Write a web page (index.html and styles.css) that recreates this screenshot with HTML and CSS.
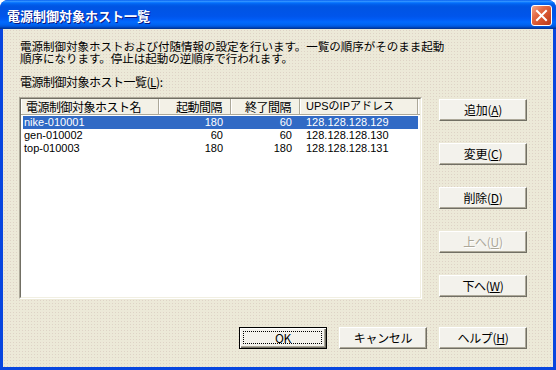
FILE: index.html
```html
<!DOCTYPE html>
<html lang="ja">
<head>
  <meta charset="UTF-8" />
  <title>電源制御対象ホスト一覧</title>
  <link rel="stylesheet" href="styles.css">
</head>
<body>

<div class="window">
  <div class="titlebar">
    <span class="title">電源制御対象ホスト一覧</span>
    <button class="close">
      <svg width="13" height="13" viewBox="0 0 13 13">
        <path d="M2 2 L11 11 M11 2 L2 11" stroke="#fff" stroke-width="2" stroke-linecap="square" fill="none"/>
      </svg>
    </button>
  </div>

  <div class="client">
    <div class="desc">
      <div class="line">電源制御対象ホストおよび付随情報の設定を行います。一覧の順序がそのまま起動</div>
      <div class="line">順序になります。停止は起動の逆順序で行われます。</div>
    </div>
    <div class="label">電源制御対象ホスト一覧(<u>L</u>):</div>

    <div class="main">
      <div class="listview">
        <div class="lv-inner">
          <div class="lv-head">
            <div class="hcol c-name">電源制御対象ホスト名</div>
            <div class="hcol c-start num">起動間隔</div>
            <div class="hcol c-stop num">終了間隔</div>
            <div class="hcol c-ip">UPSのIPアドレス</div>
            <div class="hcol c-rest"></div>
          </div>
          <div class="lv-body">
            <div class="lv-row selected">
              <div class="cell c-name">nike-010001</div>
              <div class="cell c-start num">180</div>
              <div class="cell c-stop num">60</div>
              <div class="cell c-ip">128.128.128.129</div>
            </div>
            <div class="lv-row">
              <div class="cell c-name">gen-010002</div>
              <div class="cell c-start num">60</div>
              <div class="cell c-stop num">60</div>
              <div class="cell c-ip">128.128.128.130</div>
            </div>
            <div class="lv-row">
              <div class="cell c-name">top-010003</div>
              <div class="cell c-start num">180</div>
              <div class="cell c-stop num">180</div>
              <div class="cell c-ip">128.128.128.131</div>
            </div>
          </div>
        </div>
      </div>

      <div class="side">
        <button class="btn">追加(<u>A</u>)</button>
        <button class="btn">変更(<u>C</u>)</button>
        <button class="btn">削除(<u>D</u>)</button>
        <button class="btn" disabled>上へ(<u>U</u>)</button>
        <button class="btn">下へ(<u>W</u>)</button>
      </div>
    </div>

    <div class="footer">
      <button class="btn default">OK</button>
      <button class="btn">キャンセル</button>
      <button class="btn">ヘルプ(<u>H</u>)</button>
    </div>
  </div>
</div>

</body>
</html>
```

FILE: styles.css
```css
body{
  margin:0;
  font-family:"Noto Sans CJK JP",sans-serif;
  background:#fff
}
.window{
  width:556px;
  height:370px;
  display:flex;
  flex-direction:column;
  background:#0846df;
  border-radius:8px 8px 0 0;
  overflow:hidden
}

/* title bar */
.titlebar{
  height:29px;
  flex:none;
  display:flex;
  align-items:center;
  justify-content:space-between;
  padding:0 4px 0 7px;
  box-sizing:border-box;
  background:linear-gradient(to bottom,#0058ee 0%,#3593ff 4%,#288eff 6%,#127dff 8%,#036ffc 10%,#0262ee 14%,#0057e5 20%,#0054e3 24%,#0055eb 56%,#005bf5 66%,#026afe 76%,#0062ef 86%,#0052d6 92%,#0040ab 96%,#003092 100%)
}
.title{
  color:#fff;
  font-weight:bold;
  font-size:13px;
  padding-top:2px;
  text-shadow:1px 1px #0a1883
}
.close{
  width:21px;
  height:21px;
  padding:0;
  margin-top:1px;
  border:1px solid #fff;
  border-radius:3px;
  background:linear-gradient(135deg,#f4a88c 0%,#e46a45 35%,#d2502b 65%,#b8381a 100%);
  display:flex;
  align-items:center;
  justify-content:center
}

/* client area */
.client{
  flex:1;
  margin:0 3px 3px;
  background-color:#ece9d8;
  background-image:radial-gradient(circle,rgba(205,185,175,.45) .6px,transparent 1px);
  background-size:3px 3px;
  padding:11px 26px 0 16px;
  display:flex;
  flex-direction:column;
  font-size:12px
}
.desc{
  margin-left:1px;
  font-size:11.5px
}
.line{
  height:12px;
  line-height:12px;
  white-space:nowrap
}
.label{
  margin:12px 0 0 1px;
  line-height:12px;
  letter-spacing:-.5px
}
u{text-decoration:underline;text-underline-offset:1px}

.main{
  display:flex;
  margin-top:9px
}

/* list view */
.listview{
  width:403px;
  height:202px;
  box-sizing:border-box;
  border:1px solid;
  border-color:#aca899 #fff #fff #aca899
}
.lv-inner{
  height:100%;
  box-sizing:border-box;
  border:1px solid;
  border-color:#716f64 #f1efe2 #f1efe2 #716f64;
  background:#fff
}
.lv-head{
  display:flex;
  height:16px;
  box-sizing:border-box;
  background:#f3f1e7;
  border-bottom:1px solid #aca899;
  font-size:12px;
  letter-spacing:-.5px;
  line-height:15px
}
.hcol{
  box-sizing:border-box;
  border-right:1px solid #aca899;
  box-shadow:inset 1px 0 #fff;
  white-space:nowrap;
  overflow:hidden
}
.hcol.c-name{width:138px;padding-left:5px}
.hcol.c-start{width:72px}
.hcol.c-stop{width:69px}
.hcol.c-ip{width:118px;padding-left:6px;font-family:"Liberation Sans","Noto Sans CJK JP",sans-serif;font-size:11px;letter-spacing:0}
.hcol.c-rest{flex:1;border-right:none}
.num{text-align:right;padding-right:8px}

.lv-body{padding-top:1px}
.lv-row{
  display:flex;
  height:13px;
  width:395px;
  margin-left:2px;
  font-family:"Liberation Sans","Noto Sans CJK JP",sans-serif;
  font-size:11px;
  line-height:13px
}
.lv-row.selected{background:#316ac5;color:#fff}
.cell{box-sizing:border-box;white-space:nowrap}
.cell.c-name{width:136px;padding-left:1px}
.cell.c-start{width:72px}
.cell.c-stop{width:69px}
.cell.c-ip{width:118px;padding-left:6px}

/* buttons */
.side{
  display:flex;
  flex-direction:column;
  gap:22px;
  margin-left:17px;
  padding-top:2px
}
.btn{
  position:relative;
  width:88px;
  height:22px;
  box-sizing:border-box;
  padding:0;
  font-family:"Noto Sans CJK JP",sans-serif;
  font-size:12px;
  letter-spacing:-.3px;
  line-height:18px;
  color:#000;
  background:#f3f2ec;
  border:1px solid;
  border-color:#fff #716f64 #716f64 #fff;
  box-shadow:inset -1px -1px #aca899
}
.btn:disabled{
  color:#aca899;
  text-shadow:1px 1px #fff
}
.btn.default{
  border:1px solid #000;
  box-shadow:inset 1px 1px #fff,inset -1px -1px #716f64,inset -2px -2px #aca899
}
.btn.default::after{
  content:"";
  position:absolute;
  left:3px;
  top:3px;
  right:4px;
  bottom:4px;
  border:1px dotted #000
}
.footer{
  display:flex;
  justify-content:flex-end;
  gap:12px;
  margin-top:28px
}
```
